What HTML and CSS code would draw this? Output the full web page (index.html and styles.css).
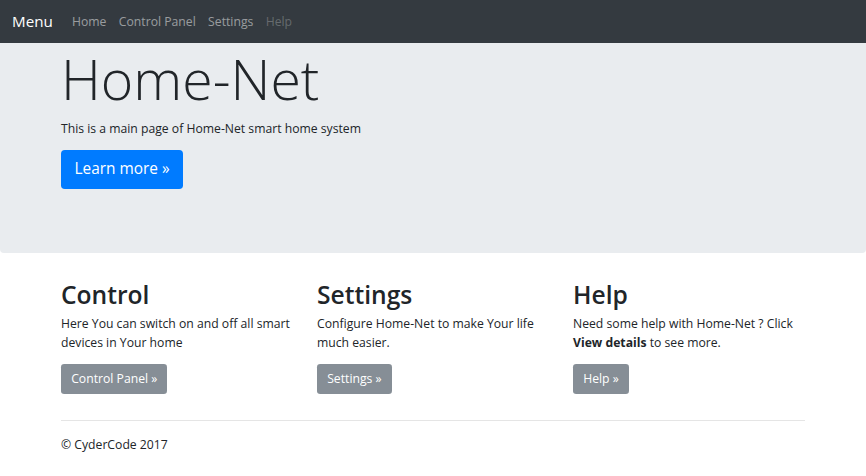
FILE: index.html
```html
<!DOCTYPE html>
<html lang="en">
<head>
<meta charset="utf-8">
<title>Home-Net</title>
<link rel="stylesheet" href="styles.css">
</head>
<body>
<nav class="navbar">
  <a class="brand" href="#">Menu</a>
  <ul class="nav">
    <li><a class="nav-link" href="#">Home</a></li>
    <li><a class="nav-link" href="#">Control Panel</a></li>
    <li><a class="nav-link" href="#">Settings</a></li>
    <li><a class="nav-link disabled" href="#">Help</a></li>
  </ul>
</nav>
<main>
  <section class="jumbotron">
    <div class="container">
      <h1 class="display">Home-Net</h1>
      <p class="intro">This is a main page of Home-Net smart home system</p>
      <p class="cta"><a class="btn btn-primary btn-lg" href="#">Learn more »</a></p>
    </div>
  </section>
  <div class="container">
    <div class="row">
      <div class="col">
        <h2>Control</h2>
        <p>Here You can switch on and off all smart devices in Your home</p>
        <p class="cta"><a class="btn btn-secondary" href="#">Control Panel »</a></p>
      </div>
      <div class="col">
        <h2>Settings</h2>
        <p>Configure Home-Net to make Your life much easier.</p>
        <p class="cta"><a class="btn btn-secondary" href="#">Settings »</a></p>
      </div>
      <div class="col">
        <h2>Help</h2>
        <p>Need some help with Home-Net ? Click <b>View details</b> to see more.</p>
        <p class="cta"><a class="btn btn-secondary" href="#">Help »</a></p>
      </div>
    </div>
    <hr class="divider">
    <footer class="footer">
      <p>© CyderCode 2017</p>
    </footer>
  </div>
</main>
</body>
</html>
```

FILE: styles.css
```css
* { box-sizing: border-box; }
html, body { margin: 0; padding: 0; }
body {
  font-family: "Open Sans", "Noto Sans", sans-serif;
  font-size: 12.2px;
  line-height: 19.2px;
  color: #212529;
  background: #fff;
}
a { text-decoration: none; }
p { margin: 0 0 12.8px; }

.navbar {
  height: 43px;
  background: #343a40;
  display: flex;
  align-items: center;
  padding: 0 12.8px 0 12px;
}
.brand {
  color: #fff;
  font-size: 15.2px;
  margin-right: 13px;
}
.nav {
  list-style: none;
  margin: 0;
  padding: 0;
  display: flex;
}
.nav-link {
  display: block;
  padding: 0 6.2px;
  font-size: 12.2px;
  color: rgba(255,255,255,.5);
}
.nav-link.disabled { color: rgba(255,255,255,.25); }

.container {
  width: 744px;
  margin: 0 auto;
}

.jumbotron {
  background: #e9ecef;
  padding: 2px 0 51.2px;
  margin-bottom: 27.6px;
  border-radius: 0 0 4px 4px;
}
.display {
  font-size: 55.4px;
  font-weight: 300;
  line-height: 68px;
  margin: 0 0 6.4px;
}
.cta { margin-bottom: 12.8px; }
.btn {
  display: inline-block;
  color: #fff;
  text-align: center;
  border-radius: 3.2px;
}
.btn-primary { background: #007bff; }
.btn-lg {
  font-size: 15.4px;
  line-height: 24px;
  padding: 7.4px 13.5px;
  border-radius: 3.8px;
}
.btn-secondary {
  background: #868e96;
  padding: 5.8px 10.2px;
}
.intro { margin-bottom: 11.5px; }

.row {
  display: grid;
  grid-template-columns: repeat(3, 232px);
  column-gap: 24px;
}
h2 {
  font-size: 24.6px;
  font-weight: 600;
  line-height: 30.7px;
  margin: 0 0 2.6px;
}
.col p { margin-bottom: 11.5px; }
b { font-weight: 700; }

.divider {
  border: 0;
  border-top: 1px solid rgba(0,0,0,.1);
  margin: 14.5px 0 13.8px;
}
.footer p { margin: 0 0 12.8px; }
```
